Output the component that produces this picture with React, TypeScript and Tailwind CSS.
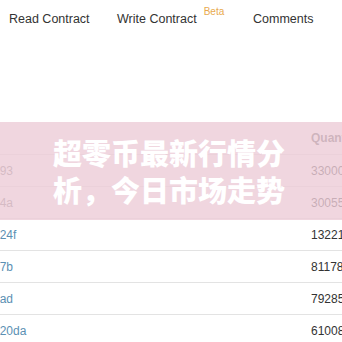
import React from 'react';

interface Row {
  addr: string;
  qty: string;
}

const rows: Row[] = [
  { addr: '393', qty: '33000' },
  { addr: 'a4a', qty: '30055' },
  { addr: '024f', qty: '13221' },
  { addr: '57b', qty: '81178' },
  { addr: '0ad', qty: '79285' },
  { addr: '620da', qty: '61008' },
];

export default function App() {
  return (
    <div
      className="relative w-[342px] h-[342px] overflow-hidden bg-white"
      style={{ fontFamily: '"Liberation Sans", Arial, sans-serif' }}
    >
      {/* tab bar */}
      <div className="flex items-center h-[38px] pl-[9px] text-[12.5px] text-[#333] whitespace-nowrap">
        <div className="w-[108px]">Read Contract</div>
        <div className="w-[136px] flex items-start">
          <span>Write Contract</span>
          <span className="ml-[7px] -mt-[6px] text-[10px] text-[#e8a94e]">Beta</span>
        </div>
        <div>Comments</div>
      </div>

      <div className="h-[84px]" />

      {/* table */}
      <div className="text-[12px] whitespace-nowrap">
        <div className="flex items-center h-[33px] border-b border-[#e3e3e3]">
          <div className="flex-1" />
          <div className="w-[31px] overflow-hidden font-bold text-[#555]">Quantity</div>
        </div>
        {rows.map((r, i) => (
          <div key={i} className="flex items-center h-[32px] border-b border-[#e3e3e3]">
            <div className="flex-1 overflow-hidden">
              <span className={i < 2 ? 'block -ml-[7px] text-[#777]' : 'block -ml-[7px] text-[#5b90b3]'}>
                {r.addr}
              </span>
            </div>
            <div className="w-[31px] overflow-hidden text-[#333]">{r.qty}</div>
          </div>
        ))}
      </div>

      {/* pink banner */}
      <div className="absolute left-0 top-[122px] w-[342px] h-[98px] bg-[#ecccd7]/80 flex items-center justify-center">
        <div
          className="w-[236px] text-[29px] leading-[37px] font-black text-white"
          style={{ fontFamily: '"Noto Sans CJK SC", sans-serif' }}
        >
          超零币最新行情分析，今日市场走势
        </div>
      </div>
    </div>
  );
}
